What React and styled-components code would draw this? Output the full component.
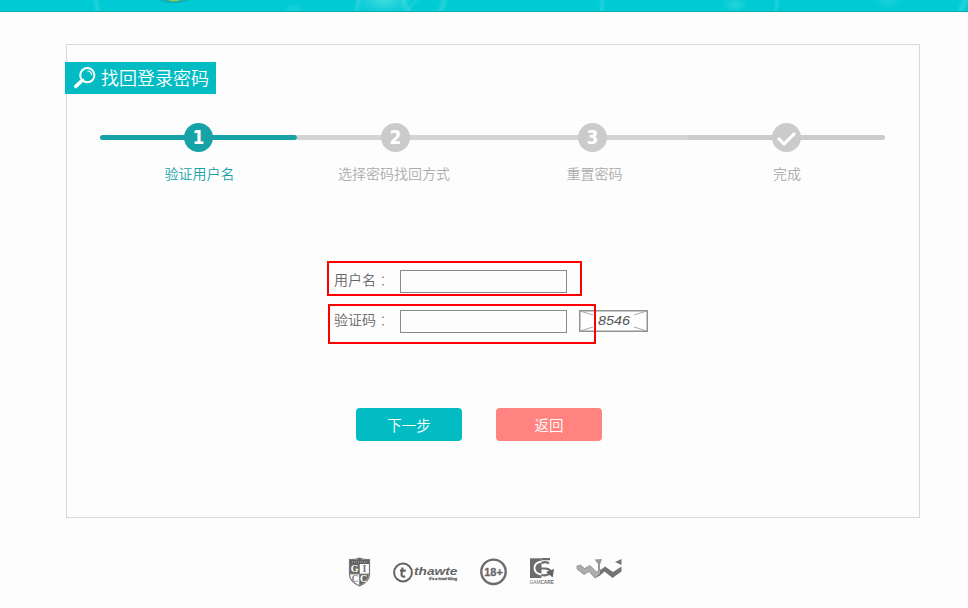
import React from "react";
import styled, { createGlobalStyle } from "styled-components";

const GlobalStyle = createGlobalStyle`
  * { box-sizing: border-box; }
  body {
    margin: 0;
    background: #fefdfe;
    font-family: "Noto Sans CJK SC", "Liberation Sans", sans-serif;
    font-size: 14px;
    font-weight: 350;
    overflow: hidden;
  }
`;

const Page = styled.div`
  height: 608px;
  overflow: hidden;
`;

const Banner = styled.header`
  height: 12px;
  background: #00cbd4;
  border-bottom: 1px solid #05adb5;
  svg { display: block; }
`;

const Card = styled.main`
  width: 854px;
  height: 474px;
  margin: 32px 0 0 66px;
  padding-top: 17px;
  border: 1px solid #d9d9d9;
`;

const Title = styled.h1`
  display: flex;
  align-items: center;
  width: 151px;
  height: 32px;
  margin: 0 0 0 -2px;
  padding-left: 8px;
  gap: 4px;
  background: #03bcc3;
  color: #fff;
  font-size: 18px;
  font-weight: 350;
  line-height: 28px;
  white-space: nowrap;
`;

const TitleText = styled.span`
  margin-top: -3px;
`;

const Steps = styled.ol`
  display: flex;
  width: 785px;
  margin: 29px 0 0 33px;
  padding: 0;
  list-style: none;
`;

const Step = styled.li`
  flex: 0 0 197px;
  display: flex;
  flex-direction: column;
  align-items: center;
  color: ${(p) => (p.$active ? "#17a2a8" : "#acacac")};
  &:last-child { margin-left: -3px; }
`;

const Track = styled.div`
  display: flex;
  align-items: center;
  width: 197px;
  height: 29px;
`;

const Bar = styled.div`
  display: flex;
  align-items: center;
  justify-content: center;
  width: 100%;
  height: 5px;
  border-radius: ${(p) => (p.$rounded ? "3px" : "0")};
  background: ${(p) => p.$color};
`;

const Dot = styled.span`
  flex: none;
  display: flex;
  align-items: center;
  justify-content: center;
  width: 29px;
  height: 29px;
  padding-bottom: 1px;
  border-radius: 50%;
  background: ${(p) => (p.$active ? "#17a2a8" : "#cbcbcb")};
  color: #fff;
  font: bold 19px/28px "DejaVu Sans Condensed", "DejaVu Sans", sans-serif;
  font-stretch: condensed;
`;

const StepLabel = styled.span`
  margin-top: 11px;
  margin-left: ${(p) => p.$shift}px;
  line-height: 20px;
  white-space: nowrap;
`;

const Form = styled.form`
  display: flex;
  flex-direction: column;
  gap: 17px;
  margin: 87px 0 0 267px;
`;

const Field = styled.div`
  position: relative;
  display: flex;
  align-items: center;
  height: 23px;
`;

const FieldLabel = styled.label`
  width: 66px;
  color: #666;
  line-height: 20px;
  margin-top: -5px;
  white-space: nowrap;
`;

const Colon = styled.span`
  font-family: "Noto Sans CJK TC", sans-serif;
  font-weight: 100;
  line-height: 1;
  vertical-align: -1px;
`;

const Input = styled.input`
  width: 167px;
  height: 23px;
  border: 1px solid #8a8a8a;
  background: #fefdfe;
  padding: 0 4px;
  outline: none;
`;

const Highlight = styled.span`
  position: absolute;
  left: ${(p) => p.$left}px;
  top: ${(p) => p.$top}px;
  width: ${(p) => p.$width}px;
  height: ${(p) => p.$height}px;
  border: 2px solid #f00;
  pointer-events: none;
`;

const Captcha = styled.svg`
  display: block;
  margin: -1px 0 0 12px;
`;

const Actions = styled.div`
  display: flex;
  gap: 34px;
  margin: 75px 0 0 289px;
`;

const Button = styled.button`
  width: 106px;
  height: 33px;
  padding: 1px 0 0;
  border: 0;
  border-radius: 4px;
  background: ${(p) => (p.$secondary ? "#ff8381" : "#03bcc3")};
  color: #fff;
  font: 350 14.5px/32px "Noto Sans CJK SC", sans-serif;
`;

const Partners = styled.footer`
  display: flex;
  align-items: flex-start;
  margin: 39px 0 0 348px;
  svg { display: block; flex: none; }
`;

const Thawte = styled.svg`
  margin: 5px 0 0 21px;
`;
const Adult = styled.svg`
  margin: 1px 0 0 21px;
`;
const GamCare = styled.svg`
  margin: 1px 0 0 22px;
`;
const Ribbon = styled.svg`
  margin: 1px 0 0 21px;
`;

const steps = [
  { mark: "1", label: "验证用户名", shift: 2, active: true, color: "#17a2a8", rounded: true },
  { mark: "2", label: "选择密码找回方式", shift: -3, color: "#d4d4d4" },
  { mark: "3", label: "重置密码", shift: 4, color: "#d4d4d4" },
  { label: "完成", shift: 1, color: "#cbcbcb", rounded: true },
];

export default function App() {
  return (
    <Page>
      <GlobalStyle />
      <Banner>
        <svg width="968" height="11" viewBox="0 0 968 11">
          <defs>
            <radialGradient id="glow">
              <stop offset="0" stopColor="#fff" stopOpacity=".26" />
              <stop offset="1" stopColor="#fff" stopOpacity="0" />
            </radialGradient>
            <filter id="soften" x="-5%" y="-50%" width="110%" height="200%">
              <feGaussianBlur stdDeviation=".9" />
            </filter>
          </defs>
          <ellipse cx="174" cy="-4" rx="18" ry="7.5" fill="#0fb4b8" />
          <ellipse cx="174" cy="-2" rx="8" ry="3.2" fill="#9ccb45" />
          <ellipse cx="384" cy="0" rx="30" ry="15" fill="url(#glow)" />
          <ellipse cx="294" cy="9" rx="11" ry="6" fill="url(#glow)" opacity=".4" />
          <ellipse cx="735" cy="5" rx="13" ry="8" fill="url(#glow)" opacity=".6" />
          <ellipse cx="888" cy="1" rx="14" ry="9" fill="url(#glow)" opacity=".4" />
          <g fill="none" stroke="#fff" strokeOpacity=".13" filter="url(#soften)">
            <path d="M95 -3l3 17" strokeWidth="4" />
            <path d="M359 -3l-3 17M602 -3v17" strokeWidth="4" />
            <circle cx="424" cy="-1" r="20" strokeWidth="5" />
            <path d="M419 -1c-5 3-9 7-10 12" strokeOpacity=".3" />
            <path d="M778 -3l-3 17" strokeWidth="3" />
            <path d="M967 -3l-8 17" strokeWidth="5" />
          </g>
        </svg>
      </Banner>

      <Card>
        <Title>
          <svg width="24" height="24" viewBox="0 0 24 24" fill="none" stroke="#fff" strokeLinecap="round">
            <circle cx="14.3" cy="9.2" r="7.1" strokeWidth="2" />
            <path d="M14.8 5c2.2.2 3.5 1.6 3.8 3.6" strokeWidth="1.2" />
            <path d="M8 15.5l-5.3 5" strokeWidth="3.6" />
            <path d="M9.3 14.4l1-1" strokeWidth="1.5" />
          </svg>
          <TitleText>找回登录密码</TitleText>
        </Title>

        <Steps>
          {steps.map((s) => (
            <Step key={s.label} $active={s.active}>
              <Track>
                <Bar $color={s.color} $rounded={s.rounded}>
                  <Dot $active={s.active}>
                    {s.mark || (
                      <svg width="21" height="17" viewBox="0 0 21 17" fill="none" stroke="#fff" strokeWidth="3">
                        <path d="M2 9l6 6L19 4" />
                      </svg>
                    )}
                  </Dot>
                </Bar>
              </Track>
              <StepLabel $shift={s.shift}>{s.label}</StepLabel>
            </Step>
          ))}
        </Steps>

        <Form>
          <Field>
            <FieldLabel htmlFor="user">用户名<Colon lang="zh-TW">：</Colon></FieldLabel>
            <Input id="user" />
            <Highlight $left={-7} $top={-9} $width={255} $height={35} />
          </Field>
          <Field>
            <FieldLabel htmlFor="code">验证码<Colon lang="zh-TW">：</Colon></FieldLabel>
            <Input id="code" />
            <Captcha width="69" height="22" viewBox="0 0 69 22">
              <rect x=".75" y=".75" width="67.5" height="20.5" fill="#fff" stroke="#929292" strokeWidth="1.5" />
              <path d="M1 1l13 4M68 1L55 5M1 21l13-4M68 21l-13-4" stroke="#aaa" fill="none" />
              <text x="19" y="15" textLength="32" lengthAdjust="spacingAndGlyphs" fill="#555" fontFamily="Liberation Sans" fontStyle="italic" fontWeight="400" fontSize="13">8546</text>
            </Captcha>
            <Highlight $left={-6} $top={-6} $width={268} $height={40} />
          </Field>
        </Form>

        <Actions>
          <Button type="button">下一步</Button>
          <Button type="button" $secondary>返回</Button>
        </Actions>
      </Card>

      <Partners>
        <svg width="24" height="31" viewBox="0 0 24 31">
          <path d="M1.500 2.500Q6 3 11.500 1 17 3 21.500 2.500v15q0 7-10 11.500-10-4.500-10-11.500z" fill="#fff" stroke="#777" strokeWidth="1.2" />
          <path d="M2 3Q7 3.500 11.500 1.500 16 3.500 21 3v4H2z" fill="#606060" />
          <path d="M2 7h9.500v10H2zM11.500 17H21q0 7-9.500 11.500z" fill="#6a6a6a" />
          <path d="M11.500 7v21M1.500 17h20" stroke="#888" />
          <path d="M4 5h15" stroke="#ccc" strokeWidth=".8" strokeDasharray="1 1" />
          <g fontFamily="Liberation Serif" fontWeight="700" fontSize="10" textAnchor="middle">
            <text x="6.7" y="15" fill="#fff">G</text>
            <text x="16.5" y="15" fill="#777">I</text>
            <text x="7" y="24.5" fill="#888">C</text>
            <text x="15.500" y="24.5" fill="#fff">C</text>
          </g>
        </svg>
        <Thawte width="66" height="22" viewBox="0 0 66 22" fill="#646464">
          <circle cx="10" cy="10.5" r="8.9" fill="none" stroke="#646464" strokeWidth="2" />
          <path d="M9.500 5.500L8.600 12q-.3 2.600 1.800 2.600h1.800M7 8.600h5.800" fill="none" stroke="#646464" strokeWidth="2.2" />
          <text x="21" y="13.3" textLength="43.5" lengthAdjust="spacingAndGlyphs" fontFamily="Liberation Sans" fontWeight="700" fontStyle="italic" fontSize="11.5">thawte</text>
          <text x="36" y="18" textLength="28" lengthAdjust="spacingAndGlyphs" fontFamily="Liberation Sans" fontWeight="700" fontSize="4" stroke="#646464" strokeWidth=".3">it's a trust thing</text>
        </Thawte>
        <Adult width="27" height="28" viewBox="0 0 27 28">
          <circle cx="13.5" cy="13.8" r="12.2" fill="none" stroke="#6c6c6c" strokeWidth="2.4" />
          <text x="4.3" y="17.8" textLength="18.5" lengthAdjust="spacingAndGlyphs" fill="#666" stroke="#666" strokeWidth=".3" fontFamily="Liberation Sans" fontWeight="700" fontSize="11">18+</text>
        </Adult>
        <GamCare width="26" height="28" viewBox="0 0 26 28">
          <path d="M1 .3h11.500v19.700H1z" fill="#6c6c6c" />
          <path d="M12.500 3.500Q5.500 4.500 5.500 10T12.500 16.500" fill="none" stroke="#fff" strokeWidth="1.8" />
          <path d="M12.500 1.200h8.500M12.500 5q5-2 7.500.5M12.500 17q5 1.500 9.500-2.500M11 10.500h5q4 0 6 3" fill="none" stroke="#6c6c6c" strokeWidth="2.200" />
          <path d="M17 14l8-3-1.300 8.500z" fill="#626262" />
          <text x=".5" y="25.8" textLength="24.5" lengthAdjust="spacingAndGlyphs" fill="#707070" fontFamily="Liberation Sans" fontSize="5"><tspan>GAM</tspan><tspan fontWeight="700">CARE</tspan></text>
        </GamCare>
        <Ribbon width="46" height="22" viewBox="0 0 46 22">
          <path d="M1 8l3.500-1 4 3.500L14 7.500l6.500 6.500 4-2.500v4.500L19 20l-6-6.500-5 3L1 11z" fill="#acacac" stroke="#8a8a8a" strokeWidth=".8" />
          <path d="M18.500 1.500L26 1l-2 5.500v6l-2 .5V6z" fill="#989898" />
          <path d="M24 12.500l5-4 8 5.500 8.500-5.500v5l-9 6.500-8-6.500-4.500 4-5 2.500 5-4.500z" fill="#747474" />
          <path d="M39 4l6.500-3v6z" fill="#747474" />
        </Ribbon>
      </Partners>
    </Page>
  );
}
